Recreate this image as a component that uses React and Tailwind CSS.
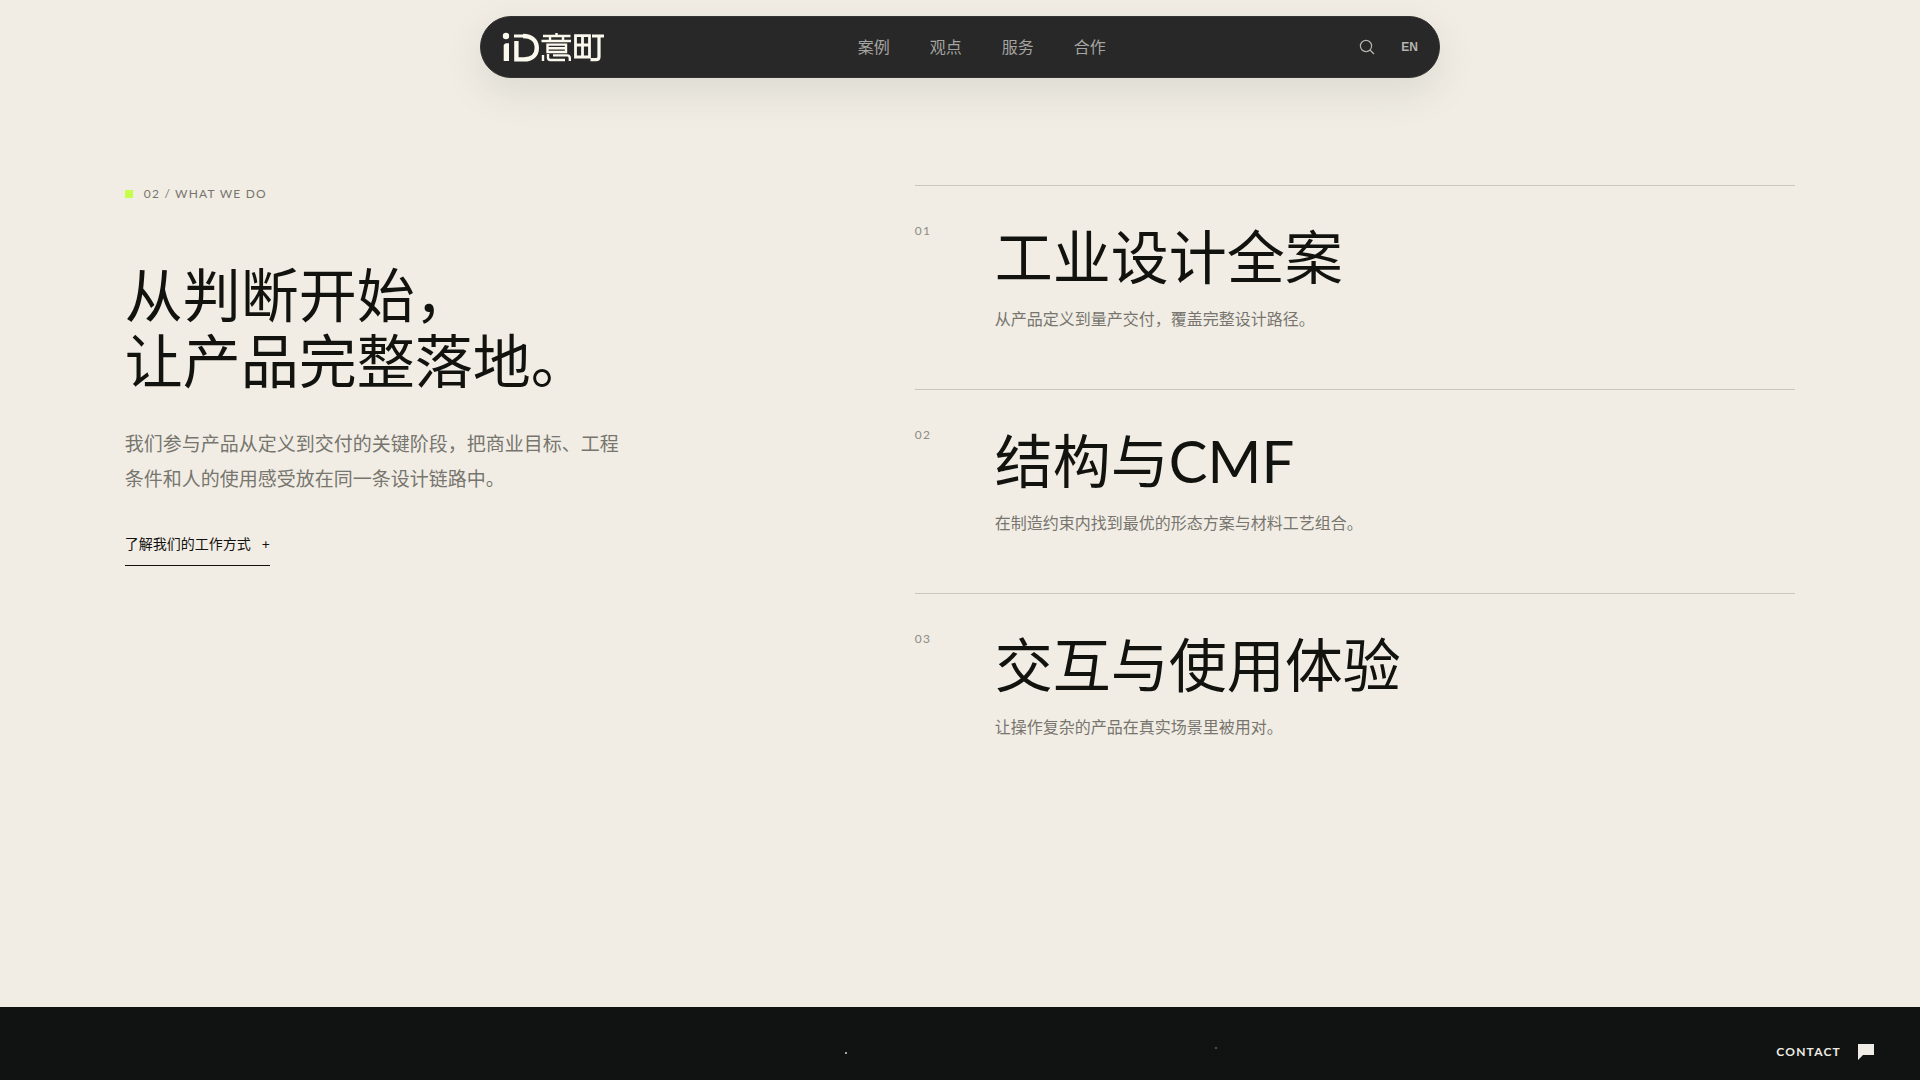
import React from 'react';

const navLinks = [
  { label: '案例', href: '#cases' },
  { label: '观点', href: '#insights' },
  { label: '服务', href: '#services' },
  { label: '合作', href: '#contact' },
];

const services = [
  {
    number: '01',
    title: '工业设计全案',
    description: '从产品定义到量产交付，覆盖完整设计路径。',
  },
  {
    number: '02',
    title: '结构与CMF',
    description: '在制造约束内找到最优的形态方案与材料工艺组合。',
  },
  {
    number: '03',
    title: '交互与使用体验',
    description: '让操作复杂的产品在真实场景里被用对。',
  },
];

function Logo() {
  return (
    <svg width="102" height="30" viewBox="0 0 102 30" fill="none" stroke="#fbf9ee" strokeWidth="2.4" aria-hidden="true">
      {/* i */}
      <circle cx="4" cy="4" r="3.2" fill="#fbf9ee" stroke="none" />
      <path d="M1.7 13.5 Q2 11.5 4 11.2 H7 V29 H1.7 Z" fill="#fbf9ee" stroke="none" />
      {/* D */}
      <path d="M12 4 H22" strokeWidth="3" />
      <path d="M21 4 C30 4 34.8 9 34.8 16 C34.8 23 30 27.4 22 27.4 H14.4 V9" strokeWidth="4.4" />
      {/* upper half of the third mark */}
      <path d="M54.5 1 V4 M41 4 H68.5 M48 5 V9 M61 5 V9 M39.5 9 H69" />
      <path d="M45.5 12.6 H64 V20 H45.5 Z M45.5 16.3 H64" />
      <path d="M41 23 V29 M46 22 V25.6 Q46 28 48.4 28 H63 M51 23.4 H65 Q67.8 23.4 67.8 26 V29" />
      {/* field and hook */}
      <path d="M73.5 3.6 H87.5 V25 H73.5 Z M80.5 3.5 V25 M73.5 13 H87.5" strokeWidth="2.8" />
      <path d="M90 4 H102 M97 4 V25 Q97 27.6 94 27.6 H88.5" strokeWidth="3.2" />
    </svg>
  );
}

function Header() {
  return (
    <header className="px-6 pt-4">
      <div className="mx-auto flex h-[62px] max-w-[960px] items-center justify-between rounded-full border border-[#33332f] bg-[#282828] px-[21px] shadow-[0_14px_40px_rgba(40,50,30,0.1)]">
        <a href="#home" aria-label="iD意町">
          <Logo />
        </a>
        <nav className="flex gap-10 text-base text-[#a5a4a0]">
          {navLinks.map((link) => (
            <a key={link.href} href={link.href}>
              {link.label}
            </a>
          ))}
        </nav>
        <div className="flex items-center gap-[26px] text-[#b5b4af]">
          <button type="button" aria-label="搜索">
            <svg width="16" height="16" viewBox="0 0 16 16" fill="none" stroke="currentColor" strokeWidth="1.2">
              <circle cx="7" cy="7" r="5.6" />
              <path d="M11 11 L15 15" />
            </svg>
          </button>
          <button type="button" className="font-['Liberation_Sans'] text-xs font-bold">
            EN
          </button>
        </div>
      </div>
    </header>
  );
}

function Intro() {
  return (
    <div>
      <p className="flex items-center gap-[11px] text-xs leading-[18px] tracking-widest text-[#77756e]">
        <span className="size-2 bg-[#c6ff4a]" />
        02 / WHAT WE DO
      </p>
      <h2 className="mt-[59px] text-[58px] leading-[66px]">
        从判断开始，
        <br />
        让产品完整落地。
      </h2>
      <p className="mt-8 max-w-[500px] text-[19px] leading-[35px] text-[#77756e]">
        我们参与产品从定义到交付的关键阶段，把商业目标、工程条件和人的使用感受放在同一条设计链路中。
      </p>
      <a
        href="#process"
        className="mt-9 inline-flex gap-[11px] border-b border-[#12130f] pb-[9px] text-sm leading-6"
      >
        <span>了解我们的工作方式</span>
        <span>+</span>
      </a>
    </div>
  );
}

function ServiceItem({ number, title, description }) {
  return (
    <li className="grid grid-cols-[80px_1fr] border-t border-[#c9c7bf] pt-[39px] pb-14">
      <span className="text-xs leading-3 tracking-widest text-[#8d8b84]">{number}</span>
      <div>
        <h3 className="text-[58px] leading-[64px]">{title}</h3>
        <p className="mt-4 text-base leading-7 text-[#77756e]">{description}</p>
      </div>
    </li>
  );
}

function Footer() {
  return (
    <footer className="relative flex justify-end bg-[#101311] px-[46px] pt-[37px] pb-5">
      <span className="absolute top-[45px] left-[44%] size-[2px] bg-[#a3a5a0]" />
      <span className="absolute top-[40px] left-[63%] size-[2px] translate-x-[5px] bg-[#4b4e4b]" />
      <a href="#contact" className="flex items-center gap-[17px] text-[#eeece4]">
        <span className="text-xs leading-4 font-bold tracking-widest">CONTACT</span>
        <svg width="16" height="16" viewBox="0 0 16 16" fill="currentColor" aria-hidden="true">
          <path d="M0 0 H16 V11 H5 L0 16 Z" />
        </svg>
      </a>
    </footer>
  );
}

function App() {
  return (
    <div className="flex min-h-screen flex-col bg-[#f1ede5] font-['Lato','Noto_Sans_CJK_SC',sans-serif] text-[#12130f]" lang="zh-CN">
      <Header />
      <main className="grid flex-1 grid-cols-[25fr_31fr] content-start gap-20 px-[6.5vw] pt-[107px] pb-20">
        <Intro />
        <ul>
          {services.map((service) => (
            <ServiceItem key={service.number} {...service} />
          ))}
        </ul>
      </main>
      <Footer />
    </div>
  );
}

export default App;
